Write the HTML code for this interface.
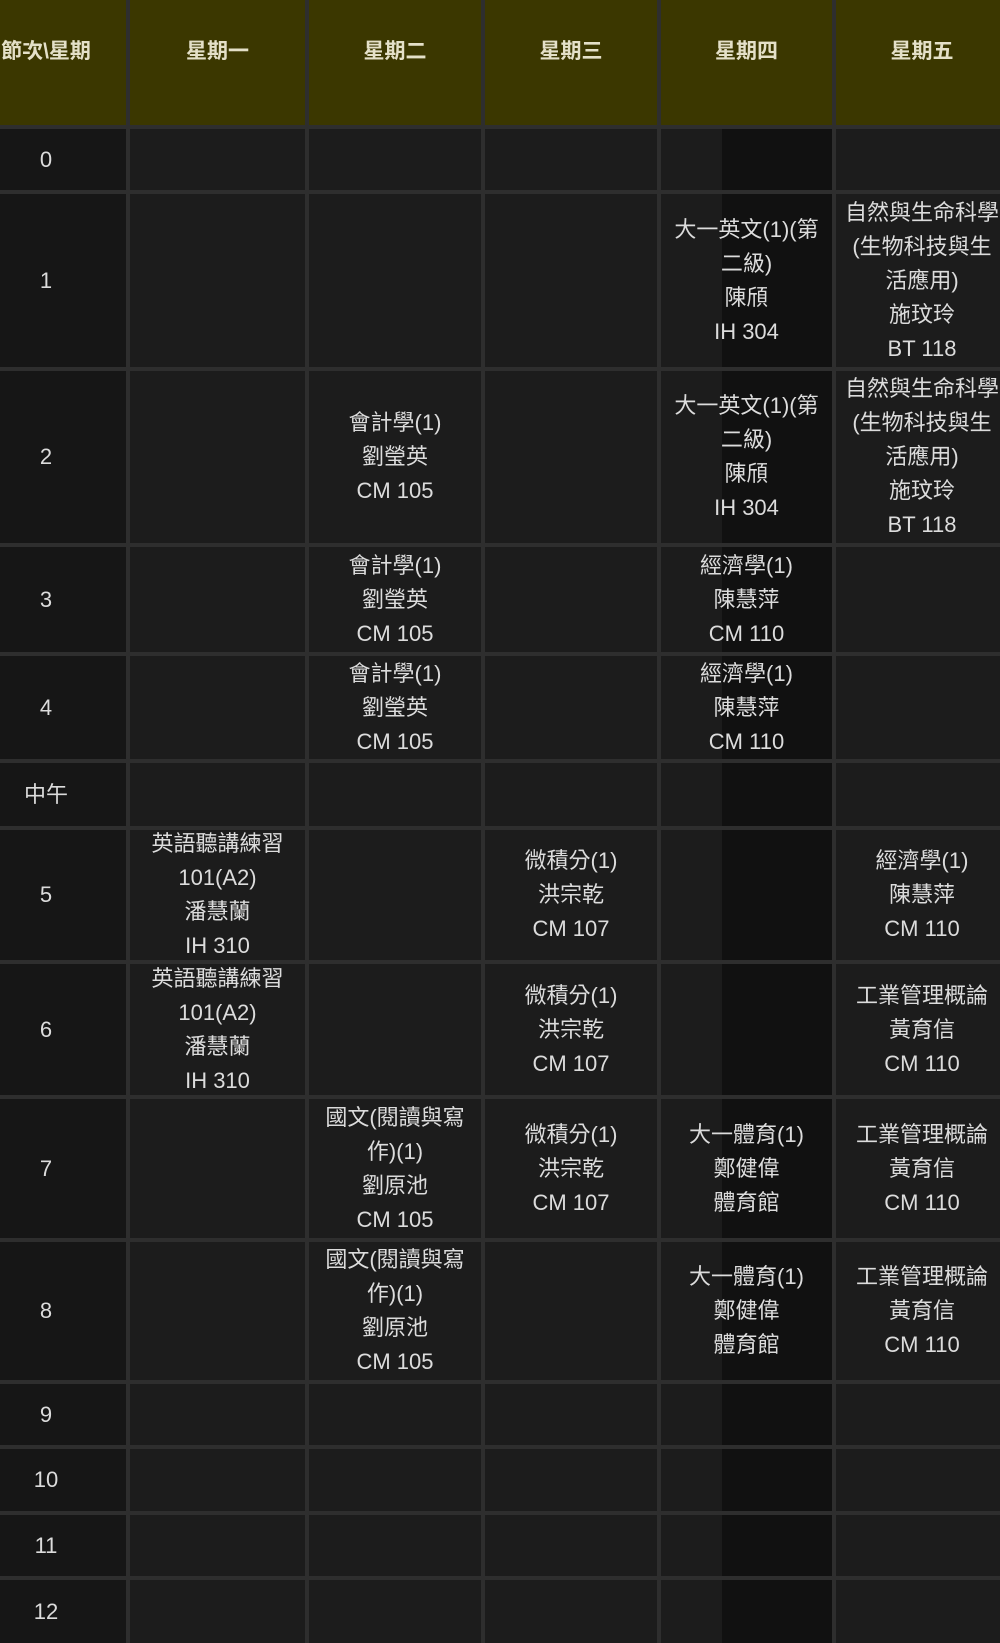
<!DOCTYPE html>
<html><head><meta charset="utf-8"><style>
html,body{margin:0;padding:0;background:#2e2e2e;width:1000px;height:1638px;overflow:hidden}
.c{position:absolute;display:flex;align-items:center;justify-content:center;flex-direction:column;text-align:center;color:#dcdcdc;font-family:"Liberation Sans","Noto Sans CJK TC",sans-serif;font-size:22px;line-height:34px;white-space:nowrap;overflow:hidden;background:#1c1c1c}
.h{background:#3b3700;color:#e4e0c8;font-size:21px;font-weight:bold;justify-content:flex-start;padding-top:38px;box-sizing:border-box}
.z{background:#161616}
.t{background:linear-gradient(90deg,#1c1c1c 0,#1c1c1c 61px,#111 61px)}
</style></head><body>
<div id="g"></div>
<script>
var xs=[-36,128,307,483,659,834,1010];
var ys=[-5,127,192,369,545,654,761,828,962,1097,1240,1382,1447,1513,1578,1645];
var hdr=["節次\\星期","星期一","星期二","星期三","星期四","星期五"];
var lbl=["0","1","2","3","4","中午","5","6","7","8","9","10","11","12"];
var E="大一英文(1)(第<br>二級)<br>陳頎<br>IH 304";
var N="自然與生命科學<br>(生物科技與生<br>活應用)<br>施玟玲<br>BT 118";
var A="會計學(1)<br>劉瑩英<br>CM 105";
var EC="經濟學(1)<br>陳慧萍<br>CM 110";
var EN="英語聽講練習<br>101(A2)<br>潘慧蘭<br>IH 310";
var M="微積分(1)<br>洪宗乾<br>CM 107";
var I="工業管理概論<br>黃育信<br>CM 110";
var C="國文(閱讀與寫<br>作)(1)<br>劉原池<br>CM 105";
var P="大一體育(1)<br>鄭健偉<br>體育館";
var data={1:{4:E,5:N},2:{2:A,4:E,5:N},3:{2:A,4:EC},4:{2:A,4:EC},6:{1:EN,3:M,5:EC},7:{1:EN,3:M,5:I},8:{2:C,3:M,4:P,5:I},9:{2:C,4:P,5:I}};
var h="";
for(var r=0;r<15;r++){for(var c=0;c<6;c++){
var x=xs[c]+2,y=ys[r]+2,w=xs[c+1]-xs[c]-4,hh=ys[r+1]-ys[r]-4;
var cls="c",txt="";
if(r==0){cls+=" h";txt=hdr[c];}
else{ if(c==0){cls+=" z";txt=lbl[r-1];} else { if(c==4)cls+=" t"; txt=(data[r-1]&&data[r-1][c])||""; } }
var st="left:"+x+"px;top:"+y+"px;width:"+w+"px;height:"+hh+"px;";
h+='<div class="'+cls+'" style="'+st+'">'+txt+'</div>';
}}
document.getElementById("g").innerHTML=h;
</script>
</body></html>
